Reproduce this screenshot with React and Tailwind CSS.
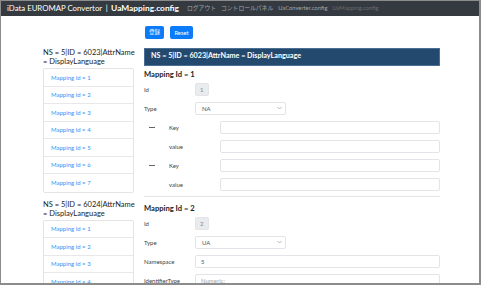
import React from "react";

const font = { fontFamily: 'Lato, "Noto Sans CJK JP", sans-serif' };

function Field({ label, children, indent = false, dash = false }) {
    return (
        <div className={`flex items-center h-[13.5px] ${indent ? "pl-[25px] relative" : ""}`}>
            {dash && <span className="absolute left-[5px] top-[6px] w-[6px] h-px bg-[#666]" />}
            <span className="w-[51px] shrink-0 text-[6px] text-[#444]">{label}</span>
            {children}
        </div>
    );
}

function TextBox({ value = "", placeholder = "", className = "flex-1" }) {
    return (
        <div className={`${className} h-full border border-[#e2e4e7] rounded-[2px] bg-white flex items-center px-[5px] text-[6px] ${value ? "text-[#555]" : "text-[#a5a8ab]"}`}>
            {value || placeholder}
        </div>
    );
}

function SelectBox({ value }) {
    return (
        <div className="w-[91px] h-full border border-[#e2e4e7] rounded-[2px] bg-white flex items-center justify-between pl-[6px] pr-[3px] text-[6px] text-[#555]">
            <span>{value}</span>
            <svg width="5" height="4" viewBox="0 0 10 8"><path d="M1 2l4 4 4-4" fill="none" stroke="#999" strokeWidth="1.4" /></svg>
        </div>
    );
}

function IdBox({ value }) {
    return (
        <div className="w-[13.5px] h-full rounded-[2px] bg-[#e9ecef] border border-[#e2e4e7] flex items-center justify-center text-[6px] text-[#888]">{value}</div>
    );
}

function MappingList({ title1, title2, count }) {
    return (
        <div>
            <div className="text-[7.5px] leading-[9px] text-[#222] whitespace-nowrap">
                <div>{title1}</div>
                <div>{title2}</div>
            </div>
            <div className="mt-[2px] border border-[#e4e4e4] rounded-[2px]">
                {Array.from({ length: count }, (_, i) => (
                    <div key={i} className="h-[17.5px] flex items-center pl-[7px] text-[6px] text-[#3d8ef5] border-b border-[#e8e8e8] last:border-b-0">
                        Mapping Id = {i + 1}
                    </div>
                ))}
            </div>
        </div>
    );
}

export default function App() {
    return (
        <div style={font} className="w-[481px] h-[285px] overflow-hidden bg-white border-t border-l border-r-2 border-b-2 border-[#8c8c8c] flex flex-col">
            <nav className="h-[15px] shrink-0 bg-[#343a40] flex items-center pl-[6px] whitespace-nowrap">
                <span className="text-[7.8px] text-white">iData EUROMAP Convertor</span>
                <span className="text-[7.8px] text-white mx-[3.5px]">|</span>
                <span className="text-[8.4px] font-bold text-white">UaMapping.config</span>
                <div className="flex items-center gap-[5px] ml-[8px] text-[5.8px]">
                    <span className="text-[#a3a6a9]">ログアウト</span>
                    <span className="text-[#a3a6a9]">コントロールパネル</span>
                    <span className="text-[#a3a6a9]">UaConverter.config</span>
                    <span className="text-[#686d72]">UaMapping.config</span>
                </div>
            </nav>

            <div className="flex gap-[6px] pl-[144px] pt-[10px]">
                <button className="w-[19px] h-[13px] rounded-[2px] bg-[#0b7bf7] text-white text-[5.5px] leading-none">登録</button>
                <button className="w-[23px] h-[13px] rounded-[2px] bg-[#0b7bf7] text-white text-[5.8px] leading-none">Reset</button>
            </div>

            <div className="flex gap-[10px] pl-[42px] pt-[9px]">
                <div className="w-[91px] shrink-0 flex flex-col gap-[7px]">
                    <MappingList title1="NS = 5|ID = 6023|AttrName" title2="= DisplayLanguage" count={7} />
                    <MappingList title1="NS = 5|ID = 6024|AttrName" title2="= DisplayLanguage" count={4} />
                </div>

                <div className="w-[296px] shrink-0">
                    <div className="h-[17.5px] bg-[#24496f] border border-[#4a6f95] flex items-center pl-[6px] text-[7.2px] font-bold text-white">
                        NS = 5|ID = 6023|AttrName = DisplayLanguage
                    </div>

                    <div className="mt-[4px] text-[7.6px] leading-[9px] font-bold text-[#222]">Mapping Id = 1</div>
                    <div className="mt-[4px] flex flex-col gap-[5.5px]">
                        <Field label="Id"><IdBox value="1" /></Field>
                        <Field label="Type"><SelectBox value="NA" /></Field>
                        <Field label="Key" indent dash><TextBox /></Field>
                        <Field label="value" indent><TextBox /></Field>
                        <Field label="Key" indent dash><TextBox /></Field>
                        <Field label="value" indent><TextBox /></Field>
                    </div>

                    <div className="mt-[5px] border-t border-[#e6e6e6]" />

                    <div className="mt-[7px] text-[7.6px] leading-[9px] font-bold text-[#222]">Mapping Id = 2</div>
                    <div className="mt-[3.5px] flex flex-col gap-[5.5px]">
                        <Field label="Id"><IdBox value="2" /></Field>
                        <Field label="Type"><SelectBox value="UA" /></Field>
                        <Field label="Namespace"><TextBox value="5" /></Field>
                        <Field label="IdentifierType"><TextBox placeholder="Numeric:" /></Field>
                    </div>
                </div>
            </div>
        </div>
    );
}
